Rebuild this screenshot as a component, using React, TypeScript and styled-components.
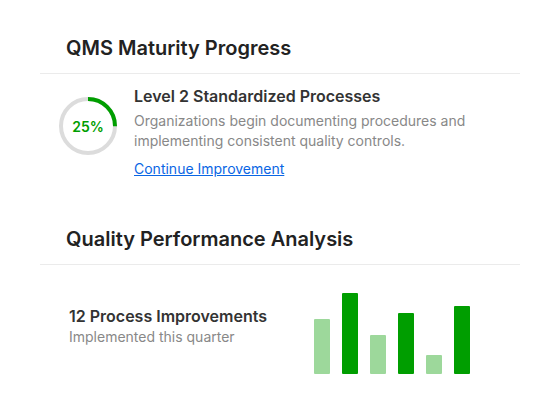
import styled, { createGlobalStyle } from "styled-components";

const GlobalStyle = createGlobalStyle`
  body {
    margin: 0;
    background: #ffffff;
    font-family: Inter, "Noto Sans", "Liberation Sans", sans-serif;
  }
`;

const bars = [
  { height: 55, strong: false },
  { height: 81, strong: true },
  { height: 39, strong: false },
  { height: 61, strong: true },
  { height: 19, strong: false },
  { height: 68, strong: true },
];

export default function App() {
  return (
    <>
      <GlobalStyle />
      <Page>
        <Section>
          <Heading>QMS Maturity Progress</Heading>
          <MaturityBody>
            <ProgressRing percent={25} />
            <LevelInfo>
              <LevelTitle>Level 2 Standardized Processes</LevelTitle>
              <Description>
                Organizations begin documenting procedures and implementing consistent quality controls.
              </Description>
              <ActionLink href="#">Continue Improvement</ActionLink>
            </LevelInfo>
          </MaturityBody>
        </Section>
        <Section>
          <Heading>Quality Performance Analysis</Heading>
          <AnalysisBody>
            <Stat>
              <StatTitle>12 Process Improvements</StatTitle>
              <StatCaption>Implemented this quarter</StatCaption>
            </Stat>
            <Chart>
              {bars.map((b, i) => (
                <Bar key={i} $strong={b.strong} style={{ height: b.height }} />
              ))}
            </Chart>
          </AnalysisBody>
        </Section>
      </Page>
    </>
  );
}

function ProgressRing({ percent }: { percent: number }) {
  const r = 27;
  const c = 2 * Math.PI * r;
  return (
    <Ring>
      <svg width="60" height="60" viewBox="0 0 60 60">
        <circle cx="30" cy="30" r={r} fill="none" stroke="#dcdcdc" strokeWidth="4" />
        <circle
          cx="30"
          cy="30"
          r={r}
          fill="none"
          stroke="#009e00"
          strokeWidth="4"
          strokeDasharray={`${(c * percent) / 100} ${c}`}
          transform="rotate(-90 30 30)"
        />
      </svg>
      <RingLabel>{percent}%</RingLabel>
    </Ring>
  );
}

const Page = styled.div`
  width: 480px;
  margin-left: 40px;
  padding-top: 30px;
`;

const Section = styled.section``;

const Heading = styled.h2`
  margin: 0;
  padding: 6px 26px 13px;
  font-size: 20px;
  line-height: 24px;
  font-weight: 600;
  color: #222222;
  border-bottom: 1px solid #ebebeb;
`;

const MaturityBody = styled.div`
  display: flex;
  align-items: flex-start;
  gap: 16px;
  padding: 11px 18px 42px;
`;

const Ring = styled.div`
  position: relative;
  width: 60px;
  height: 60px;
  margin-top: 11px;
  flex-shrink: 0;
`;

const RingLabel = styled.span`
  position: absolute;
  inset: 0;
  display: flex;
  align-items: center;
  justify-content: center;
  font-size: 14px;
  font-weight: 600;
  color: #009e00;
`;

const LevelInfo = styled.div`
  display: flex;
  flex-direction: column;
  align-items: flex-start;
`;

const LevelTitle = styled.h3`
  margin: 0 0 4px;
  font-size: 16px;
  line-height: 22px;
  font-weight: 600;
  color: #333333;
`;

const Description = styled.p`
  margin: 0 0 8px;
  font-size: 14px;
  line-height: 20px;
  color: #888888;
`;

const ActionLink = styled.a`
  font-size: 14px;
  line-height: 20px;
  color: #0a66e4;
  text-decoration: underline;
`;

const AnalysisBody = styled.div`
  display: flex;
  align-items: center;
  padding: 27px 29px 21px;
`;

const Stat = styled.div`
  width: 245px;
  margin-bottom: 14px;
`;

const StatTitle = styled.div`
  font-size: 16px;
  line-height: 22px;
  font-weight: 600;
  color: #333333;
`;

const StatCaption = styled.div`
  font-size: 14px;
  line-height: 20px;
  color: #888888;
`;

const Chart = styled.div`
  display: flex;
  align-items: flex-end;
  gap: 12px;
  height: 82px;
`;

const Bar = styled.div<{ $strong: boolean }>`
  width: 16px;
  background: ${(p) => (p.$strong ? "#009e00" : "#9dd89b")};
  border-radius: 1px;
`;
